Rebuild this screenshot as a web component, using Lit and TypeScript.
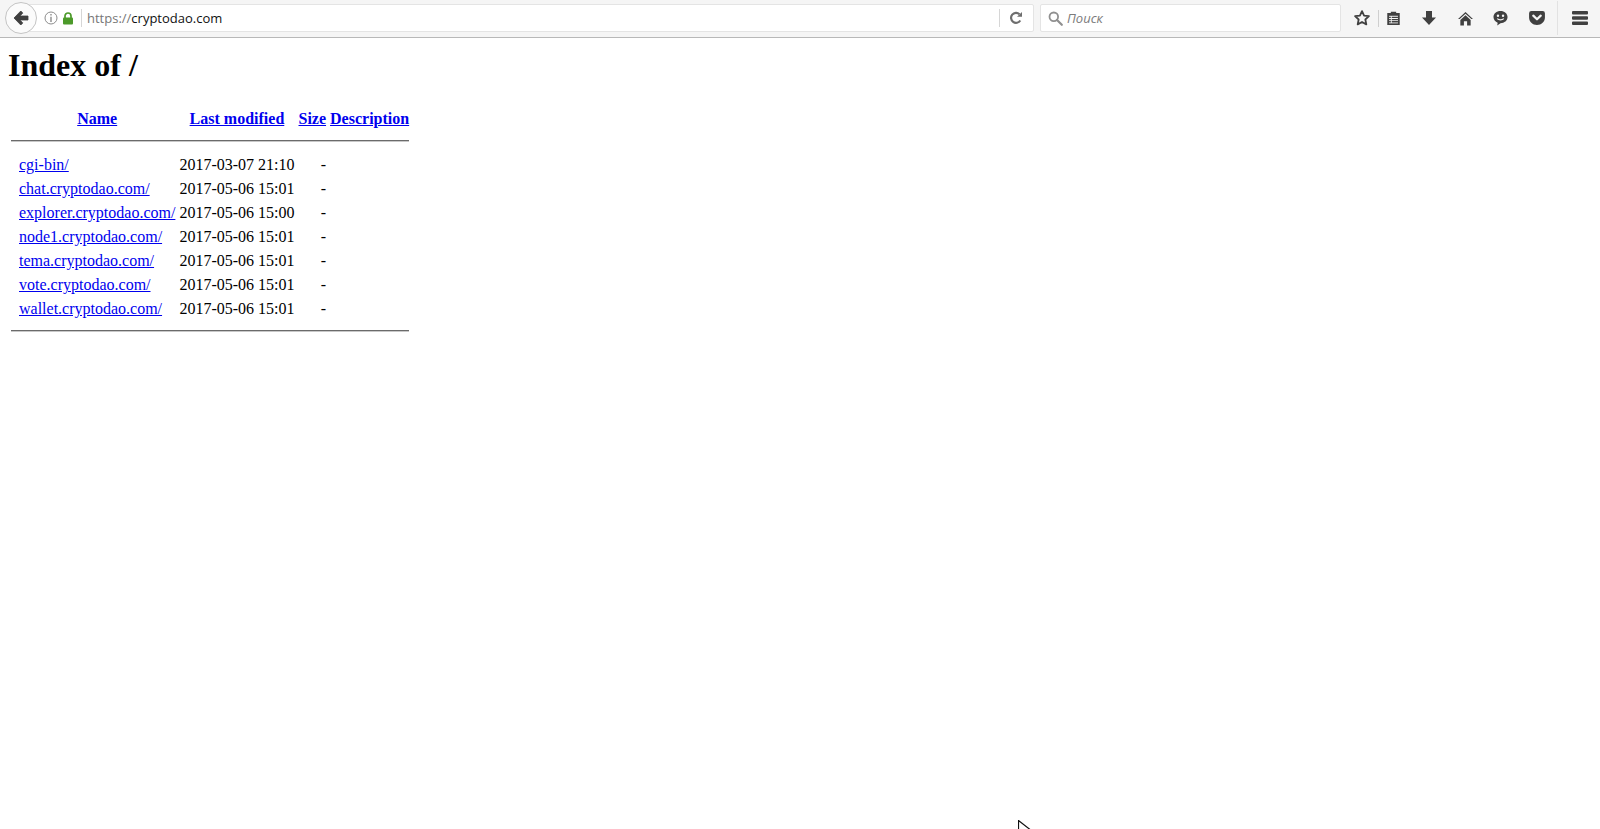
import { LitElement, html, css, svg } from "lit";
import { customElement } from "lit/decorators.js";

const rows: [string, string][] = [
  ["cgi-bin/", "2017-03-07 21:10"],
  ["chat.cryptodao.com/", "2017-05-06 15:01"],
  ["explorer.cryptodao.com/", "2017-05-06 15:00"],
  ["node1.cryptodao.com/", "2017-05-06 15:01"],
  ["tema.cryptodao.com/", "2017-05-06 15:01"],
  ["vote.cryptodao.com/", "2017-05-06 15:01"],
  ["wallet.cryptodao.com/", "2017-05-06 15:01"],
];

const I = "#404040";

const tools = [
  { w: 32, el: svg`<svg width="18" height="18" viewBox="0 0 20 20"><path d="M10 2.400l2.300 5 5.400.6-4 3.700 1.100 5.400-4.800-2.700-4.800 2.700 1.100-5.400-4-3.700 5.400-.6z" fill="none" stroke="${I}" stroke-width="2" stroke-linejoin="round"/></svg>` },
  { w: 29, el: svg`<svg width="15" height="16" viewBox="0 0 16 18"><path d="M1 3.500h4V2h6v1.500h4V17H1z" fill="${I}"/><path d="M3 6.500h10V15H3z" fill="#f5f5f5"/><path d="M3 7.500h2v1.500H3zM6 7.500h7v1.500H6zM3 10h2v1.500H3zM6 10h7v1.500H6zM3 12.500h2V14H3zM6 12.500h7V14H6z" fill="${I}"/></svg>` },
  { w: 41, el: svg`<svg width="16" height="16" viewBox="0 0 16 16"><path d="M5 1h6v6.500h4L8 15 1 7.500h4z" fill="${I}"/></svg>` },
  { w: 33, el: svg`<svg width="17" height="15" viewBox="0 0 18 16"><path d="M9 1L1 8.500h1.800L9 3l6.200 5.500H17z" fill="${I}"/><path d="M9 4.500L3.500 9.500V15.500h3.800v-4.500h3.400v4.500h3.800V9.500z" fill="${I}"/></svg>` },
  { w: 37, el: svg`<svg width="15" height="16" viewBox="0 0 16 17"><path d="M8 1c4.200 0 7.500 2.700 7.500 6.500S12.200 14 8 14l-3.500 2.500.5-3C2.400 12.500.5 10.300.5 7.500.5 3.700 3.800 1 8 1z" fill="${I}"/><circle cx="5.300" cy="6" r="1.300" fill="#f5f5f5"/><circle cx="10.700" cy="6" r="1.300" fill="#f5f5f5"/><path d="M4.500 9.200c1.800 1.600 5.200 1.600 7 0" fill="none" stroke="#f5f5f5" stroke-width="1.300"/></svg>` },
  { w: 36, el: svg`<svg width="16" height="14" viewBox="0 0 17 15"><path d="M2.500 0h12A2.500 2.500 0 0 1 17 2.500V7c0 4.500-3.800 8-8.500 8S0 11.500 0 7V2.500A2.500 2.500 0 0 1 2.500 0z" fill="${I}"/><path d="M4.500 5l4 3.800 4-3.800" fill="none" stroke="#f5f5f5" stroke-width="2.400" stroke-linecap="round" stroke-linejoin="round"/></svg>` },
];

@customElement("app-root")
export class AppRoot extends LitElement {
  static styles = css`
    :host { display: block; width: 1600px; height: 829px; overflow: hidden; position: relative; background: #fff; font-family: "Liberation Serif", serif; color: #000; }
    .toolbar { display: flex; align-items: center; height: 38px; box-sizing: border-box; background: #f5f5f5; border-bottom: 1px solid #b8b8b8; padding: 0 0 1px 5px; font-family: "Open Sans", "Noto Sans", sans-serif; }
    .back { width: 32px; height: 32px; box-sizing: border-box; border-radius: 50%; border: 1px solid #c4c4c4; background: #fbfbfb; display: flex; align-items: center; justify-content: center; flex: none; position: relative; z-index: 1; }
    .url { width: 1014px; height: 28px; margin-left: -17px; padding-left: 23px; box-sizing: border-box; display: flex; align-items: center; background: #fff; border: 1px solid #e4e4e4; border-radius: 2px; flex: none; font-size: 13px; }
    .info { display: flex; }
    .lock { margin-left: 4px; display: flex; }
    .vsep { width: 1px; height: 18px; background: #d6d6d6; flex: none; }
    .url .vsep-a { margin: 0 5px 0 7px; }
    .proto { color: #777; }
    .host { color: #111; }
    .grow { flex: 1; }
    .reload { width: 31px; margin-right: 2px; height: 100%; display: flex; align-items: center; justify-content: center; }
    .search { width: 301px; height: 28px; margin-left: 6px; padding-left: 7px; box-sizing: border-box; display: flex; align-items: center; gap: 4px; background: #fff; border: 1px solid #e4e4e4; border-radius: 2px; flex: none; font-size: 13px; font-style: italic; color: #7c7c7c; }
    .tools { display: flex; align-items: center; flex: none; height: 100%; margin-left: 5px; }
    .sep { width: 1px; background: #e2e2e2; flex: none; }
    .s2 { height: 17px; background: #cfcfcf; }
    .s3 { height: 34px; margin-left: 2px; }
    .tool { display: flex; align-items: center; justify-content: center; flex: none; }
    .menu { width: 43px; display: flex; justify-content: center; }
    main { padding: 0 8px; }
    h1 { font-size: 32px; font-weight: bold; margin: 9px 0 21px; line-height: 37px; }
    table { border-collapse: separate; border-spacing: 2px; font-size: 16px; }
    th, td { padding: 1px; line-height: 18px; height: 20px; box-sizing: content-box; white-space: nowrap; }
    th { height: 22px; font-weight: bold; text-align: center; vertical-align: middle; }
    td { vertical-align: middle; }
    .ico { width: 4px; padding: 1px; }
    th a, td a { color: #0000ee; }
    .hrcell { height: auto; line-height: 0; }
    hr { border: 0; border-top: 1px solid #6b6b6b; border-bottom: 1px solid #c8c8c8; height: 0; }
    .hr-top { margin: 6px 0 9px; }
    .hr-bottom { margin: 7px 0 8px; }
    .sz { text-align: right; }
    .cursor { position: absolute; left: 1018px; top: 820px; }
  `;

  render() {
    return html`
      <div class="toolbar">
        <div class="back">
          <svg width="18" height="16" viewBox="0 0 18 16"><path d="M8.800 1L2 8l6.800 7 2-2.100-2.900-2.900H16V6H7.900l2.900-2.900z" fill="#404040" stroke="#404040" stroke-width=".8" stroke-linejoin="round"/></svg>
        </div>
        <div class="url">
          <span class="info"><svg width="14" height="14" viewBox="0 0 14 14"><circle cx="7" cy="7" r="6" fill="none" stroke="#8c8c8c" stroke-width="1"/><path d="M6.300 3h1.400v1.500H6.300zM6.300 5.800h1.400V11H6.300z" fill="#8c8c8c"/></svg></span>
          <span class="lock"><svg width="12" height="13" viewBox="0 0 12 13"><path d="M3 6V4a3 3 0 0 1 6 0v2" fill="none" stroke="#4c9a2a" stroke-width="1.700"/><rect x="1" y="5.500" width="10" height="7" rx="1" fill="#4c9a2a"/></svg></span>
          <span class="vsep vsep-a"></span>
          <span><span class="proto">https://</span><span class="host">cryptodao.com</span></span>
          <span class="grow"></span>
          <span class="vsep"></span>
          <span class="reload"><svg width="14" height="14" viewBox="0 0 14 14"><path d="M11.300 9.500A5 5 0 1 1 10.500 3.200" fill="none" stroke="#6e6e6e" stroke-width="2.200"/><path d="M8 5.800h5V1z" fill="#6e6e6e"/></svg></span>
        </div>
        <div class="search">
          <svg width="15" height="15" viewBox="0 0 15 15"><circle cx="5.800" cy="5.800" r="4.300" fill="none" stroke="#909090" stroke-width="1.800"/><path d="M9 9l4.800 4.800" stroke="#909090" stroke-width="2.200" stroke-linecap="round"/></svg>
          <span>Поиск</span>
        </div>
        <div class="tools">
          ${tools.slice(0, 1).map((t) => html`<span class="tool" style="width:${t.w}px">${t.el}</span>`)}
          <span class="sep s2"></span>
          ${tools.slice(1).map((t) => html`<span class="tool" style="width:${t.w}px">${t.el}</span>`)}
          <span class="sep s3"></span>
          <span class="menu"><svg width="16" height="14" viewBox="0 0 16 14"><path d="M1 0h14a1 1 0 0 1 1 1v1.500a1 1 0 0 1-1 1H1a1 1 0 0 1-1-1V1a1 1 0 0 1 1-1zM1 5.200h14a1 1 0 0 1 1 1v1.500a1 1 0 0 1-1 1H1a1 1 0 0 1-1-1V6.200a1 1 0 0 1 1-1zM1 10.500h14a1 1 0 0 1 1 1V13a1 1 0 0 1-1 1H1a1 1 0 0 1-1-1v-1.500a1 1 0 0 1 1-1z" fill="#404040"/></svg></span>
        </div>
      </div>
      <main>
        <h1>Index of /</h1>
        <table>
          <tr>
            <th class="ico"></th>
            <th><a href="#">Name</a></th>
            <th><a href="#">Last modified</a></th>
            <th><a href="#">Size</a></th>
            <th><a href="#">Description</a></th>
          </tr>
          <tr><th class="hrcell" colspan="5"><hr class="hr-top" /></th></tr>
          ${rows.map(
            ([n, d]) => html`<tr>
              <td class="ico"></td>
              <td><a href="#">${n}</a></td>
              <td>${d}</td>
              <td class="sz">-</td>
              <td>&nbsp;</td>
            </tr>`
          )}
          <tr><th class="hrcell" colspan="5"><hr class="hr-bottom" /></th></tr>
        </table>
      </main>
      <svg class="cursor" width="14" height="12" viewBox="0 0 14 12"><path d="M0.500 0.500V12L3 9.500h9z" fill="#fff" stroke="#111" stroke-width="1.200"/></svg>
    `;
  }
}
